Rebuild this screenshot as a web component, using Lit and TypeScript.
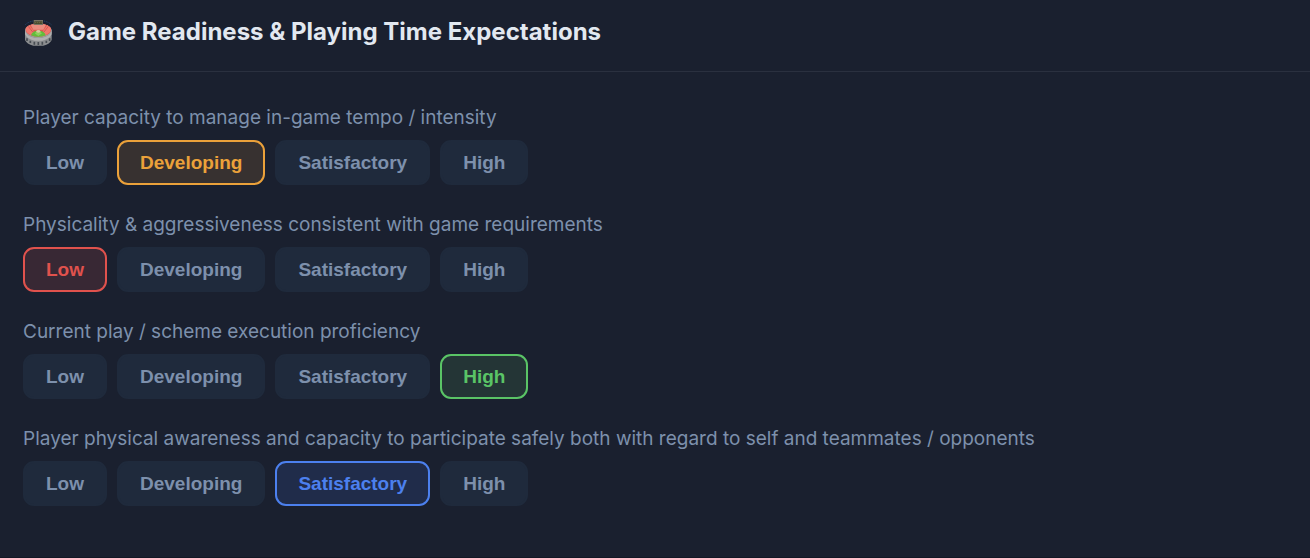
import { LitElement, html, css, svg } from "lit";
import { customElement, property, state } from "lit/decorators.js";
import { classMap } from "lit/directives/class-map.js";

const LEVELS = ["Low", "Developing", "Satisfactory", "High"] as const;
type Level = (typeof LEVELS)[number];

const stadiumIcon = svg`
  <g fill="none" stroke="#234a78" stroke-width="3" stroke-dasharray="3 2.5">
    <path d="M48 51 Q56 43 71 40" />
    <path d="M126 51 Q118 43 103 40" />
  </g>
  <path d="M47 66 V97 Q52 109 72 114 H102 Q122 109 127 97 V66 Z" fill="#8b8d8f" />
  <ellipse cx="87" cy="69" rx="40" ry="21" fill="#a3a2a1" />
  <ellipse cx="87" cy="67" rx="38" ry="20" fill="#df5a52" />
  <path d="M49 61 L60 52 L73 70 L66 83 Q48 75 49 61 Z" fill="#f0776c" />
  <path d="M125 61 L114 52 L101 70 L108 83 Q126 75 125 61 Z" fill="#f0776c" />
  <path d="M64 51 Q87 45 110 51 L102 66 H72 Z" fill="#e98c7f" />
  <path d="M57 56 L70 73 M117 56 L104 73" stroke="#c24c47" stroke-width="2" />
  <path d="M65 83 Q68 69 87 69 Q106 69 109 83 Q87 92 65 83 Z" fill="#62bd3c" />
  <path d="M76 77 L87 69 L98 77 L87 85 Z" fill="#8cd05c" />
  <ellipse cx="87" cy="71" rx="6" ry="4" fill="#d8c9a2" />
  <path d="M47 70 Q53 87 76 90 H98 Q121 87 127 70 V80 Q119 96 98 99 H76 Q55 96 47 80 Z" fill="#b0b0b0" />
  <path d="M53 92 V100 M63 99 V106 M75 102 V111 M87 103 V112 M99 102 V111 M111 99 V106 M121 92 V100" stroke="#474c52" stroke-width="5" />
  <rect x="73" y="37" width="28" height="15" fill="#777464" />
  <rect x="75" y="41" width="24" height="8" fill="#45472f" />
  <path d="M77 45 H97" stroke="#85804a" stroke-width="2" stroke-dasharray="4 2" />
`;

@customElement("rating-row")
export class RatingRow extends LitElement {
  @property() label = "";
  @property() value: Level = "Low";

  static styles = css`
    :host {
      display: block;
    }
    .label {
      margin: 0 0 8px;
      font-size: 19px;
      line-height: 28px;
      color: #7d90ac;
    }
    .options {
      display: flex;
      flex-wrap: wrap;
      gap: 10px;
    }
    .option {
      box-sizing: border-box;
      margin: 0;
      padding: 9px 21px;
      border: 2px solid #1f2a3c;
      border-radius: 11px;
      background: #1f2a3c;
      color: #7d90ac;
      font: bold 19px/23px "Liberation Sans", Arial, sans-serif;
      cursor: pointer;
    }
    .low {
      border-color: #e0524d;
      background: #382834;
      color: #e0524d;
    }
    .developing {
      border-color: #eba13a;
      background: #373130;
      color: #eba13a;
    }
    .satisfactory {
      border-color: #4c80ee;
      background: #202c4a;
      color: #4c80ee;
    }
    .high {
      border-color: #5ac466;
      background: #243536;
      color: #5ac466;
    }
  `;

  render() {
    return html`
      <p class="label" id="label">${this.label}</p>
      <div class="options" role="group" aria-labelledby="label">
        ${LEVELS.map((level) => {
          const active = level === this.value;
          return html`<button
            type="button"
            class=${classMap({ option: true, [level.toLowerCase()]: active })}
            aria-pressed=${active ? "true" : "false"}
            @click=${() => (this.value = level)}
          >${level}</button>`;
        })}
      </div>
    `;
  }
}

@customElement("app-root")
export class AppRoot extends LitElement {
  @state() private questions: { label: string; value: Level }[] = [
    { label: "Player capacity to manage in-game tempo / intensity", value: "Developing" },
    { label: "Physicality & aggressiveness consistent with game requirements", value: "Low" },
    { label: "Current play / scheme execution proficiency", value: "High" },
    {
      label:
        "Player physical awareness and capacity to participate safely both with regard to self and teammates / opponents",
      value: "Satisfactory",
    },
  ];

  static styles = css`
    :host {
      display: block;
      box-sizing: border-box;
      min-height: 100vh;
      background: #1a202f;
      border-bottom: 1px solid #131825;
      font-family: Inter, sans-serif;
    }
    .header {
      display: flex;
      align-items: center;
      gap: 14px;
      padding: 16px 24px 23px;
      border-bottom: 1px solid #2a303f;
    }
    .icon {
      flex: none;
      width: 30px;
      height: 30px;
    }
    .title {
      margin: 0;
      font-size: 24px;
      line-height: 32px;
      font-weight: 700;
      color: #e2e8f0;
    }
    .body {
      display: flex;
      flex-direction: column;
      gap: 26px;
      padding: 32px 23px 50px;
    }
  `;

  render() {
    return html`
      <section>
        <header class="header">
          <svg class="icon" viewBox="44 28 90 90" aria-hidden="true">${stadiumIcon}</svg>
          <h2 class="title">Game Readiness &amp; Playing Time Expectations</h2>
        </header>
        <div class="body">
          ${this.questions.map(
            (q) => html`<rating-row .label=${q.label} .value=${q.value}></rating-row>`
          )}
        </div>
      </section>
    `;
  }
}
